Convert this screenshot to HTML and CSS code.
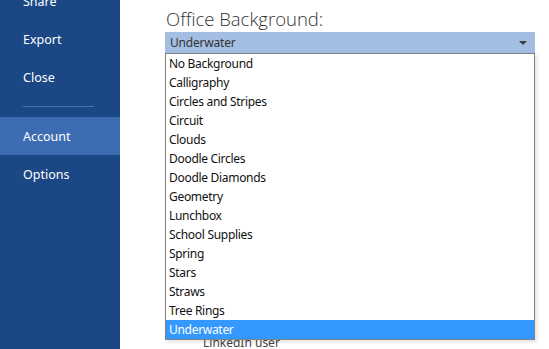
FILE: index.html
```html
<!DOCTYPE html>
<html lang="en">
<head>
    <meta charset="UTF-8">
    <meta name="viewport" content="width=device-width, initial-scale=1.0">
    <title>Account</title>
    <link rel="stylesheet" href="styles.css">
</head>
<body>
    <div class="backstage">
        <nav class="side-nav">
            <div class="nav-item nav-cut">Share</div>
            <div class="nav-item">Export</div>
            <div class="nav-item">Close</div>
            <div class="nav-sep"></div>
            <div class="nav-item active">Account</div>
            <div class="nav-item">Options</div>
        </nav>

        <main class="content">
            <h2 class="label">Office Background:</h2>
            <div class="picker">
                <div class="picker-box">
                    <span>Underwater</span>
                    <span class="arrow"></span>
                </div>
                <ul class="picker-list">
                    <li>No Background</li>
                    <li>Calligraphy</li>
                    <li>Circles and Stripes</li>
                    <li>Circuit</li>
                    <li>Clouds</li>
                    <li>Doodle Circles</li>
                    <li>Doodle Diamonds</li>
                    <li>Geometry</li>
                    <li>Lunchbox</li>
                    <li>School Supplies</li>
                    <li>Spring</li>
                    <li>Stars</li>
                    <li>Straws</li>
                    <li>Tree Rings</li>
                    <li class="selected">Underwater</li>
                </ul>
            </div>
            <div class="services">LinkedIn user</div>
        </main>
    </div>
</body>
</html>
```

FILE: styles.css
```css
body {
    margin: 0;
    padding: 0;
    font-family: "Noto Sans", "Open Sans", sans-serif;
    background: white;
    overflow: hidden;
}
.backstage {
    display: flex;
    height: 349px;
}
.side-nav {
    width: 120px;
    flex-shrink: 0;
    background: #1b4785;
    color: white;
    margin-top: -18px;
}
.nav-item {
    height: 38px;
    box-sizing: border-box;
    padding-top: 2px;
    line-height: 36px;
    padding-left: 23px;
    font-size: 12.5px;
}
.nav-item.active {
    background: #3e6cb3;
}
.nav-sep {
    height: 1px;
    margin: 10px 26px 10px 23px;
    background: #4a72b2;
}
.content {
    flex: 1;
    padding-left: 45px;
}
.label {
    margin: 4px 0 0 1px;
    height: 28px;
    font-weight: 300;
    font-size: 18.5px;
    line-height: 30px;
    color: #333;
    font-family: "Open Sans", "Noto Sans", sans-serif;
}
.picker {
    position: relative;
    width: 370px;
}
.picker-box {
    height: 21px;
    line-height: 20px;
    background: #a3bde3;
    color: #333;
    font-size: 12px;
    letter-spacing: -0.2px;
    padding: 0 8px 0 5px;
    display: flex;
    justify-content: space-between;
    align-items: center;
}
.arrow {
    width: 0;
    height: 0;
    border-left: 4px solid transparent;
    border-right: 4px solid transparent;
    border-top: 4px solid #3c3c3c;
}
.picker-list {
    position: absolute;
    top: 21px;
    left: 0;
    width: 368px;
    margin: 0;
    padding: 0;
    list-style: none;
    background: white;
    border: 1px solid #828282;
    box-shadow: 2px 2px 4px rgba(0, 0, 0, 0.12);
    z-index: 2;
}
.picker-list li {
    height: 19px;
    line-height: 19px;
    padding-left: 3px;
    font-size: 12px;
    letter-spacing: -0.3px;
    color: #111;
}
.picker-list li.selected {
    background: #3399ff;
    color: white;
}
.services {
    margin: 281px 0 0 38px;
    font-size: 12px;
    color: #444;
}
```
